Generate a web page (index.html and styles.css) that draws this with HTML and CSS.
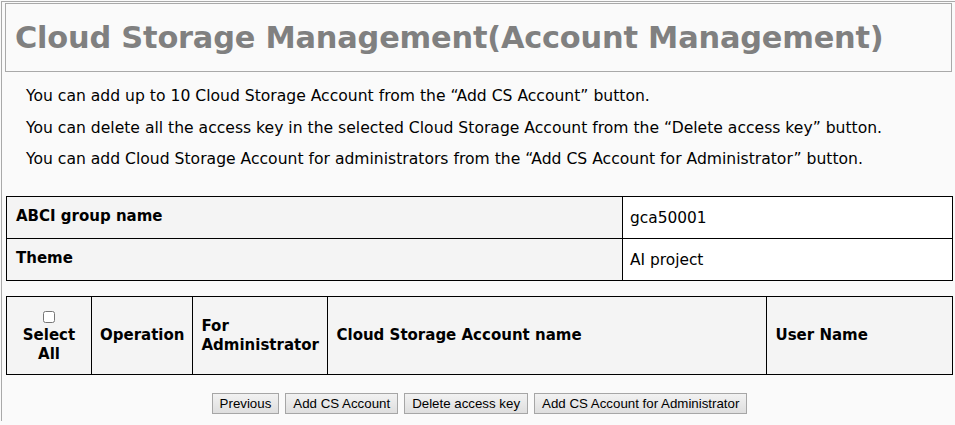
FILE: index.html
```html
<!DOCTYPE html>
<html>
<head>
<meta charset="utf-8">
<link rel="stylesheet" href="styles.css">
</head>
<body>
<div class="page">
  <div class="title-box">
    <h1 class="title">Cloud Storage Management(Account Management)</h1>
  </div>
  <div class="notes">
    <p>You can add up to 10 Cloud Storage Account from the “Add CS Account” button.</p>
    <p>You can delete all the access key in the selected Cloud Storage Account from the “Delete access key” button.</p>
    <p>You can add Cloud Storage Account for administrators from the “Add CS Account for Administrator” button.</p>
  </div>
  <table class="info">
    <tr><th>ABCI group name</th><td>gca50001</td></tr>
    <tr><th>Theme</th><td>AI project</td></tr>
  </table>
  <table class="list">
    <tr>
      <th class="c-sel"><input type="checkbox" class="chk"><br>Select<br>All</th>
      <th class="c-op">Operation</th>
      <th class="c-adm">For<br>Administrator</th>
      <th class="c-name">Cloud Storage Account name</th>
      <th class="c-user">User Name</th>
    </tr>
  </table>
  <div class="buttons">
    <button class="btn">Previous</button>
    <button class="btn">Add CS Account</button>
    <button class="btn">Delete access key</button>
    <button class="btn">Add CS Account for Administrator</button>
  </div>
</div>
</body>
</html>
```
FILE: styles.css
```css
html, body {
  margin: 0;
  padding: 0;
  background: #fafafa;
}
body {
  font-family: "DejaVu Sans", Verdana, sans-serif;
  color: #000;
}
.page {
  margin: 1px 0 0 1px;
  border-left: 1px solid #a9a9a9;
  border-top: 1px solid #a9a9a9;
  padding: 1px 0 0 3px;
  min-height: 420px;
  box-sizing: border-box;
}
.title-box {
  width: 947px;
  height: 69px;
  box-sizing: border-box;
  border: 1px solid #a9a9a9;
  display: flex;
  align-items: center;
  padding-left: 9px;
}
.title {
  margin: 0;
  font-size: 30.4px;
  font-weight: bold;
  color: #808080;
  letter-spacing: -0.2px;
}
.notes {
  padding: 9px 0 0 21px;
  height: 124px;
  box-sizing: border-box;
}
.notes p {
  margin: 0;
  font-size: 15.6px;
  line-height: 31.5px;
}
.info, .list {
  border-collapse: collapse;
  width: 947px;
  margin-left: 1px;
}
.info th, .info td, .list th {
  border: 1px solid #000;
  font-size: 15px;
  text-align: left;
  vertical-align: middle;
}
.info th {
  background: #f4f4f4;
  font-weight: bold;
  height: 42px;
  padding: 0 9px;
  width: 616px;
  vertical-align: top;
  padding-top: 10px;
  box-sizing: border-box;
}
.info td {
  background: #fff;
  padding: 0 7px;
  font-size: 15.4px;
}
.list {
  margin-top: 15px;
}
.list th {
  background: #f4f4f4;
  height: 78px;
  padding: 0 8px;
  font-weight: bold;
  line-height: 19px;
  box-sizing: border-box;
}
.list .c-sel { width: 85px; text-align: center; padding: 0; }
.list .c-op { width: 101px; }
.list .c-adm { width: 135px; }
.list .c-name { width: 439px; }
.chk {
  margin: 0;
  width: 12px;
  height: 12px;
  vertical-align: middle;
}
.buttons {
  display: flex;
  justify-content: center;
  gap: 6px;
  padding: 18px 0 0 0;
  margin-left: -1px;
}
.btn {
  font-family: "Liberation Sans", Arial, sans-serif;
  font-size: 13.3px;
  height: 21px;
  padding: 0 7px;
  border: 1px solid #a6a6a6;
  border-radius: 0;
  background: linear-gradient(#f2f2f2, #dedede);
  color: #000;
}
```
